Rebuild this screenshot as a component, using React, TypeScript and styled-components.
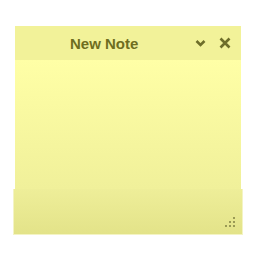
import styled, { createGlobalStyle } from 'styled-components';

const Global = createGlobalStyle`
  body {
    margin: 0;
    background: #ffffff;
    font-family: "Liberation Sans", Arial, sans-serif;
  }
`;

const Page = styled.div`
  width: 256px;
  height: 256px;
  padding-top: 26px;
  box-sizing: border-box;
  display: flex;
  flex-direction: column;
  align-items: center;
`;

const Note = styled.div`
  width: 230px;
  display: flex;
  flex-direction: column;
  align-items: center;
`;

const Header = styled.div`
  width: 226px;
  height: 34px;
  background: #f2f299;
  display: flex;
  align-items: center;
  box-sizing: border-box;
  padding: 0 9px 0 55px;
`;

const Title = styled.div`
  font-weight: 700;
  font-size: 15px;
  color: #6e6e1f;
  flex: 1;
`;

const IconButton = styled.div`
  width: 14px;
  height: 16px;
  display: flex;
  align-items: center;
  justify-content: center;
  margin-left: 11px;
`;

const Body = styled.div`
  width: 226px;
  height: 129px;
  background: linear-gradient(#ffffa6, #f0f09a);
`;

const Footer = styled.div`
  width: 230px;
  height: 46px;
  box-sizing: border-box;
  background: linear-gradient(#eeee99, #e3e389);
  border: 1px solid #f4f4c4;
  border-top: none;
  display: flex;
  align-items: flex-end;
  justify-content: flex-end;
  padding: 0 6px 6px 0;
`;

export default function App() {
  return (
    <>
      <Global />
      <Page>
        <Note>
          <Header>
            <Title>New Note</Title>
            <IconButton>
              <svg width="11" height="10" viewBox="0 0 11 10">
                <path d="M1.5 3 L5.5 7 L9.5 3" fill="none" stroke="#6e6e2a" strokeWidth="2.6" />
              </svg>
            </IconButton>
            <IconButton>
              <svg width="12" height="12" viewBox="0 0 12 12">
                <path d="M1.5 1.5 L10.5 10.5 M10.5 1.5 L1.5 10.5" fill="none" stroke="#6e6e2a" strokeWidth="2.6" />
              </svg>
            </IconButton>
          </Header>
          <Body />
          <Footer>
            <svg width="11" height="11" viewBox="0 0 11 11">
              <g fill="#9a9a55">
                <rect x="8" y="0" width="2" height="2" />
                <rect x="4" y="4" width="2" height="2" />
                <rect x="8" y="4" width="2" height="2" />
                <rect x="0" y="8" width="2" height="2" />
                <rect x="4" y="8" width="2" height="2" />
                <rect x="8" y="8" width="2" height="2" />
              </g>
            </svg>
          </Footer>
        </Note>
      </Page>
    </>
  );
}
